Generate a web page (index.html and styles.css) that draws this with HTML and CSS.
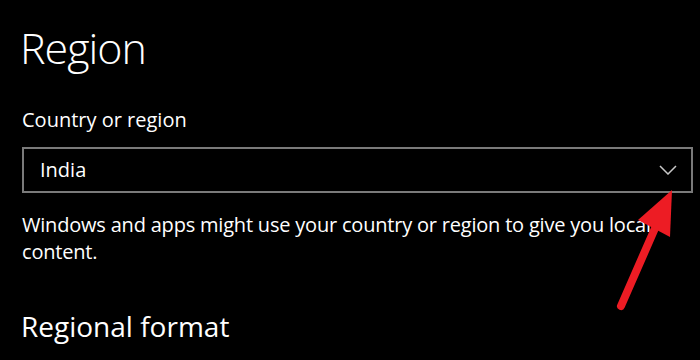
FILE: index.html
```html
<!DOCTYPE html>
<html lang="en">
<head>
  <meta charset="UTF-8">
  <title>Region</title>
  <link rel="stylesheet" href="styles.css">
</head>

<body>
  <main class="page">
    <h1 class="title">Region</h1>

    <label class="field-label" for="country">Country or region</label>
    <div class="select" id="country">
      <span class="select-value">India</span>
      <svg class="chevron" width="18" height="10" viewBox="0 0 18 10">
        <polyline points="1,1 9,9 17,1" />
      </svg>
    </div>

    <p class="hint">Windows and apps might use your country or region to give you local content.</p>

    <h2 class="section">Regional format</h2>
  </main>

  <svg class="arrow" width="700" height="360" viewBox="0 0 700 360">
    <line x1="621" y1="306" x2="656" y2="226" />
    <polygon points="672,190 638,220 670,237" />
  </svg>
</body>
</html>
```

FILE: styles.css
```css
:root {
  --bg: #000000;
  --text: #ffffff;
  --border: #7a7a7a;
  --chevron: #c8c8c8;
  --annot: #ed1c24;
}

body {
  margin: 0;
  background: var(--bg);
  color: var(--text);
  font-family: 'Open Sans', 'Noto Sans', sans-serif;
  overflow: hidden;
}

.page {
  display: flex;
  flex-direction: column;
  align-items: flex-start;
  width: 672px;
  padding-left: 22px;
}

.title {
  margin: 22px 0 0 -2px;
  font-size: 43px;
  font-weight: 300;
  letter-spacing: -1px;
  line-height: 52px;
}

.field-label {
  margin-top: 32px;
  font-size: 20px;
  line-height: 28px;
}

.select {
  margin-top: 13px;
  box-sizing: border-box;
  width: 671px;
  height: 46px;
  border: 2px solid var(--border);
  display: flex;
  align-items: center;
  justify-content: space-between;
  padding: 0 14px 0 16px;
}

.select-value {
  font-size: 20px;
  line-height: 28px;
}

.chevron polyline {
  fill: none;
  stroke: var(--chevron);
  stroke-width: 1.5;
}

.hint {
  margin: 18px 0 0;
  font-size: 20px;
  letter-spacing: -0.2px;
  line-height: 27px;
}

.section {
  margin: 43px 0 0 -1px;
  font-size: 28px;
  font-weight: 400;
  line-height: 36px;
}

.arrow {
  position: absolute;
  top: 0;
  left: 0;
  pointer-events: none;
}

.arrow line {
  stroke: var(--annot);
  stroke-width: 8;
  stroke-linecap: round;
}

.arrow polygon {
  fill: var(--annot);
}
```
